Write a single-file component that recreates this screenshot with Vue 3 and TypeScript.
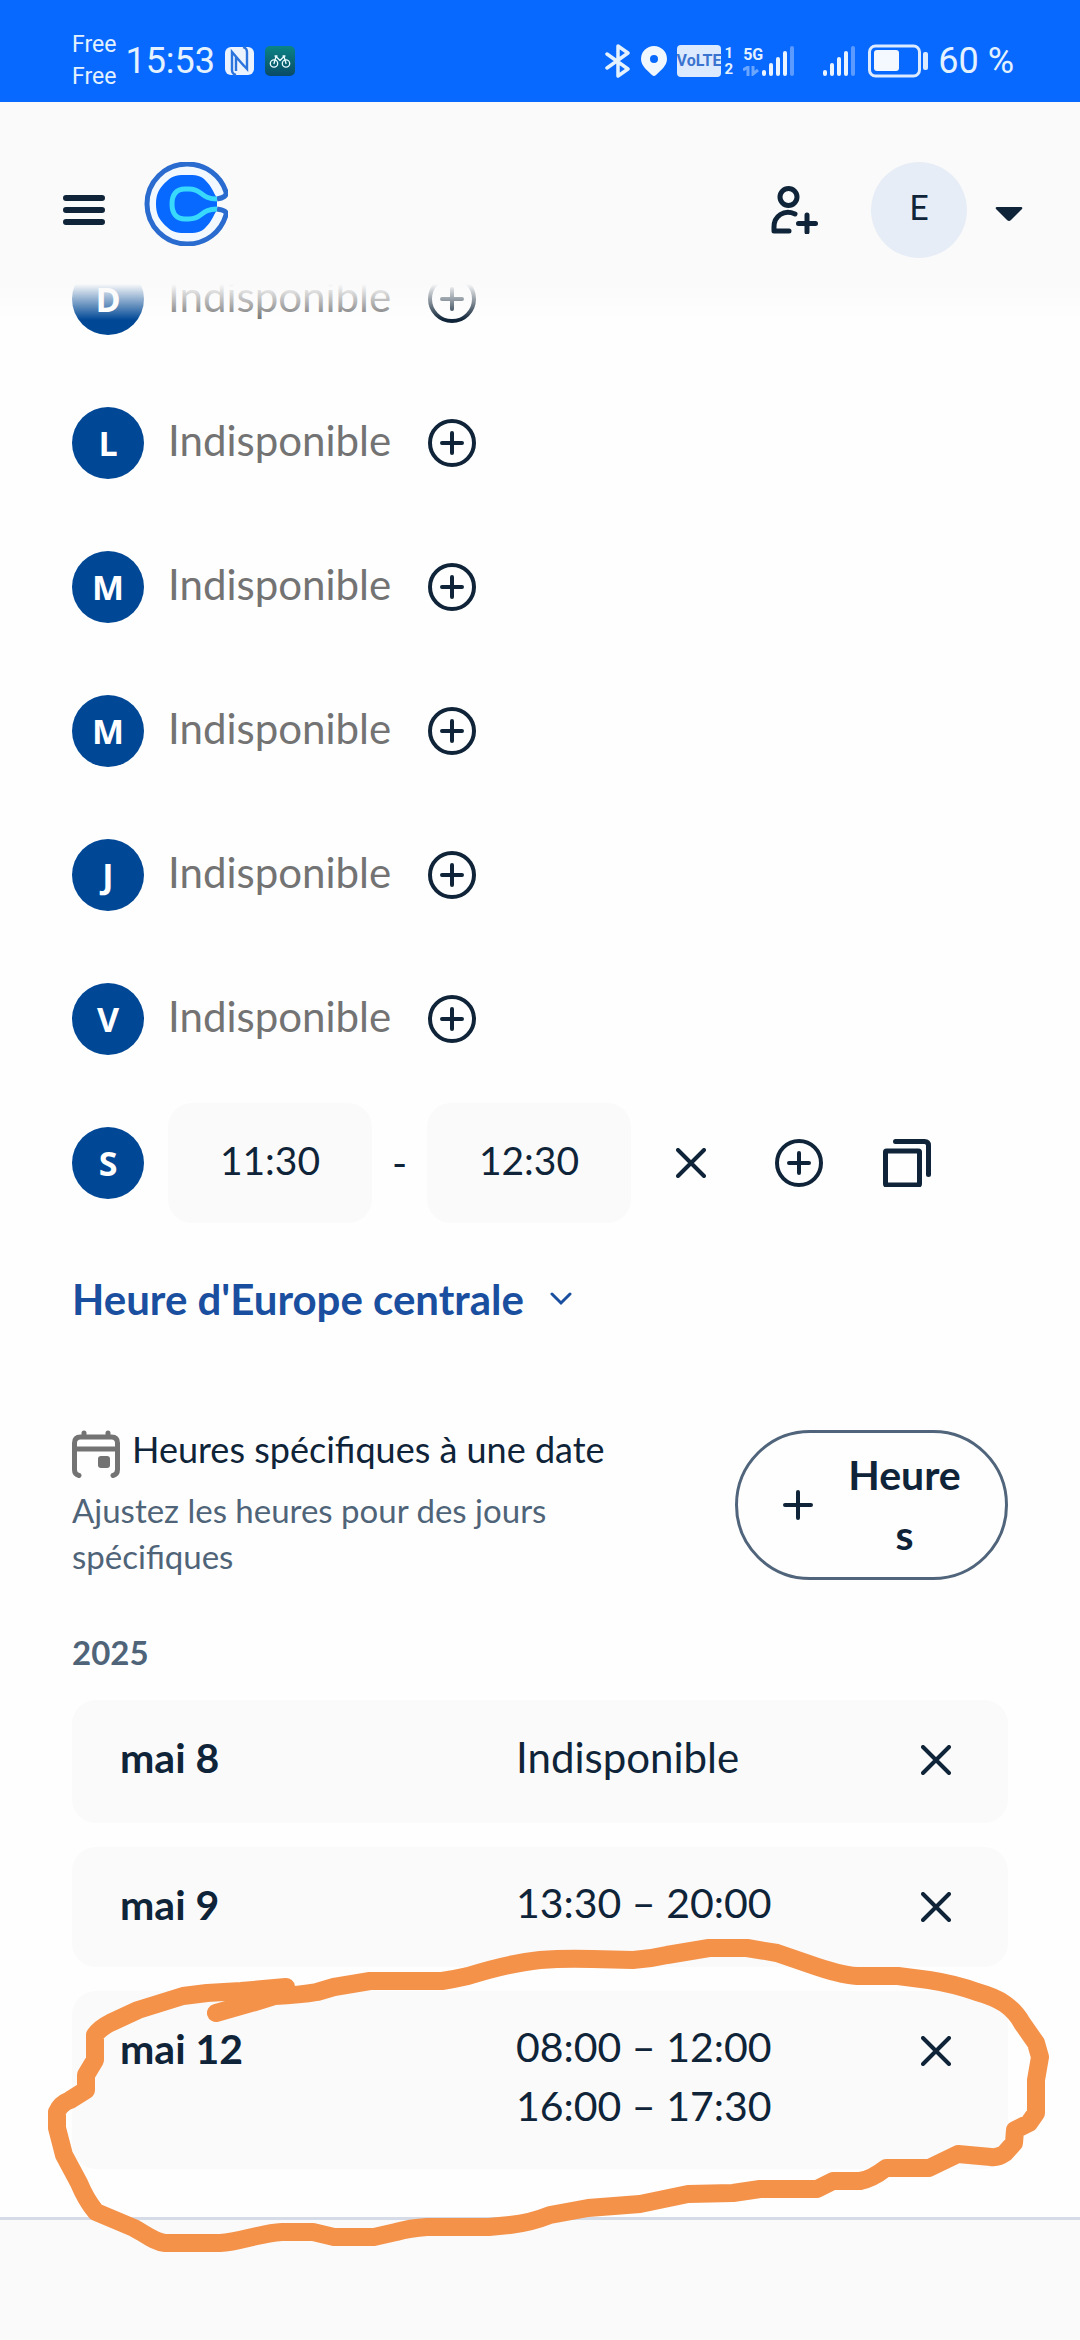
<script setup lang="ts">
import { ref } from 'vue'

interface Day {
  letter: string
  name: string
  start?: string
  end?: string
}

interface DateOverride {
  date: string
  slots: string[]
  circled?: boolean
}

const days = ref<Day[]>([
  { letter: 'D', name: 'dimanche' },
  { letter: 'L', name: 'lundi' },
  { letter: 'M', name: 'mardi' },
  { letter: 'M', name: 'mercredi' },
  { letter: 'J', name: 'jeudi' },
  { letter: 'V', name: 'vendredi' },
  { letter: 'S', name: 'samedi', start: '11:30', end: '12:30' },
])

const overrides = ref<DateOverride[]>([
  { date: 'mai 8', slots: [] },
  { date: 'mai 9', slots: ['13:30 – 20:00'] },
  { date: 'mai 12', slots: ['08:00 – 12:00', '16:00 – 17:30'], circled: true },
])
</script>

<template>
  <div class="page">
    <div class="status">
      <div class="carriers"><span>Free</span><span>Free</span></div>
      <span class="clock">15:53</span>
      <svg class="nfc" width="30" height="30" viewBox="0 0 30 30">
        <rect x="0" y="1" width="29" height="28" rx="6" fill="#eaf3ff" />
        <path d="M11 29q-4-1-4-5V6l12 14M18 1q4 1 4 5v17L11 11v14" fill="none" stroke="#2c74dd" stroke-width="2.400" />
      </svg>
      <svg class="bike" width="30" height="30" viewBox="0 0 30 30">
        <defs>
          <linearGradient id="bikeBg" x1="0" y1="0" x2="0" y2="1">
            <stop offset="0" stop-color="#0b8484" />
            <stop offset="1" stop-color="#0a4a66" />
          </linearGradient>
        </defs>
        <rect width="30" height="30" rx="5" fill="url(#bikeBg)" />
        <g fill="none" stroke="#eafcff" stroke-width="1.300" stroke-linecap="round" stroke-linejoin="round">
          <circle cx="9" cy="17.500" r="3.700" />
          <circle cx="21" cy="17.500" r="3.700" />
          <path d="M9 17.500l2-7 4 4 4-4 2 7M10 10h2M18 10h2" />
        </g>
      </svg>
      <span class="grow"></span>
      <svg class="bt" width="26" height="34" viewBox="0 0 26 34" fill="none" stroke="#e4f1ff" stroke-width="3.500" stroke-linejoin="round" stroke-linecap="round">
        <path d="M2 10l21 15-10 7V2l10 7L2 24" />
      </svg>
      <svg class="pin" width="26" height="30" viewBox="0 0 26 30">
        <path fill="#f1f7ff" fill-rule="evenodd" d="M13 0a13 13 0 0 1 13 13c0 7-7 12-11 16q-2 2-4 0C7 25 0 20 0 13A13 13 0 0 1 13 0zm0 9a4 4 0 1 0 0 8a4 4 0 0 0 0-8z" />
      </svg>
      <span class="volte">VoLTE</span>
      <span class="sims"><span>1</span><span>2</span></span>
      <span class="net">
        <span>5G</span>
        <svg width="16" height="10" viewBox="0 0 16 10" fill="none" stroke="#6aa6ff" stroke-width="3"><path d="M0 4l5-3v9M10 0v8l5-4" /></svg>
      </span>
      <svg v-for="sim in 2" :key="sim" class="bars" width="34" height="32" viewBox="0 0 34 32">
        <g fill="#eaf4ff"><rect x="1" y="25" width="4" height="6" rx="2" /><rect x="8" y="18" width="4" height="13" rx="2" /><rect x="15" y="12" width="4" height="19" rx="2" /><rect x="22" y="6" width="4" height="25" rx="2" /></g>
        <rect x="29" y="1" width="4" height="30" rx="2" fill="#5b9bff" />
      </svg>
      <svg class="battery" width="60" height="34" viewBox="0 0 60 34">
        <rect x="1.500" y="2" width="50" height="30" rx="6" fill="none" stroke="#dcebff" stroke-width="3" />
        <rect x="6" y="6" width="25" height="21" rx="3" fill="#f4f8ff" />
        <rect x="55" y="8" width="5" height="18" rx="2" fill="#dcebff" />
      </svg>
      <span class="percent">60 %</span>
    </div>

    <header class="topbar">
      <button class="plain menu" type="button" aria-label="Menu">
        <svg width="42" height="30" viewBox="0 0 42 30" stroke="#0f2438" stroke-width="6" stroke-linecap="round"><path d="M3 3h36M3 15h36M3 27h36" /></svg>
      </button>
      <a class="logo" href="#" aria-label="Accueil">
        <svg width="84" height="84" viewBox="0 0 84 84" fill="none">
          <path d="M73 47c6 1 10 2 9 6C77 70 62 82 43 82A40 40 0 0 1 43 2C62 2 77 14 82 30c1 4-3 6-9 7" fill="#f2f8ff" stroke="#2a6bd0" stroke-width="5" />
          <path d="M43 13c8 0 14 0 19 6 6 6 7 11 11 17v12c-4 6-5 11-11 17-5 6-11 6-19 6s-14 0-20-6C15 58 12 52 12 42s3-16 11-23c6-6 12-6 20-6z" fill="#0769ff" />
          <path d="M73 47c-17 0-14 10-28 10h-4C32 57 28 51 28 42s4-15 13-15h4c14 0 11 10 28 10" stroke="#38d9fb" stroke-width="5" />
        </svg>
      </a>
      <span class="grow"></span>
      <button class="plain invite" type="button" aria-label="Inviter">
        <svg width="48" height="48" viewBox="0 0 48 48" fill="none" stroke="#0f2438" stroke-width="5" stroke-linecap="round" stroke-linejoin="round">
          <circle cx="17.500" cy="11" r="8.500" />
          <path d="M24 28C13 23 3 30 3 41v4h15M36 29v17M27.500 37.500h17" />
        </svg>
      </button>
      <button class="plain account" type="button" aria-label="Compte">
        <span class="avatar">E</span>
        <svg class="caret" width="28" height="16" viewBox="0 0 28 16"><path d="M2 1h24q2 0 1 2L16 14q-2 2-4 0L1 3Q0 1 2 1z" fill="#0f2438" /></svg>
      </button>
    </header>

    <main class="content">
      <ul class="days">
        <li v-for="(day, i) in days" :key="i" class="day">
          <span class="badge">{{ day.letter }}</span>
          <template v-if="day.start">
            <input v-model="day.start" class="time" type="text" :aria-label="`Début ${day.name}`" />
            <span class="dash">-</span>
            <input v-model="day.end" class="time" type="text" :aria-label="`Fin ${day.name}`" />
            <div class="actions">
              <button class="plain action" type="button" aria-label="Supprimer">
                <svg width="30" height="30" viewBox="0 0 30 30" class="stroke"><path d="M2 2l26 26M28 2L2 28" /></svg>
              </button>
              <button class="plain action" type="button" aria-label="Ajouter">
                <svg width="48" height="48" viewBox="0 0 48 48" class="stroke"><circle cx="24" cy="24" r="22" /><path d="M24 14v20M14 24h20" /></svg>
              </button>
              <button class="plain action" type="button" aria-label="Copier">
                <svg width="48" height="48" viewBox="0 0 48 48" class="stroke heavy"><rect x="2.500" y="12" width="34" height="34" rx="1" /><path d="M12.500 2.500h29q4 0 4 4v29" /></svg>
              </button>
            </div>
          </template>
          <template v-else>
            <span class="off">Indisponible</span>
            <button class="plain add" type="button" :aria-label="`Ajouter ${day.name}`">
              <svg width="48" height="48" viewBox="0 0 48 48" class="stroke"><circle cx="24" cy="24" r="22" /><path d="M24 14v20M14 24h20" /></svg>
            </button>
          </template>
        </li>
      </ul>

      <button class="plain zone" type="button">
        <span>Heure d'Europe centrale</span>
        <svg width="22" height="14" viewBox="0 0 22 14" fill="none" stroke="#1a4f9f" stroke-width="3" stroke-linecap="round"><path d="M2 2l9 9 9-9" /></svg>
      </button>

      <section class="specific">
        <div class="intro">
          <div class="heading">
            <svg width="48" height="48" viewBox="0 0 48 48" fill="none" stroke="#737373" stroke-width="5" stroke-linecap="round">
              <path d="M7 45.500q-4.500-1-4.500-6V13q0-6 6-6h31q6 0 6 6v26.500q0 5-4.500 6M3 19h42M12 3v3M36 3v3" />
              <rect x="26" y="26" width="12" height="12" rx="3" fill="#737373" stroke="none" />
            </svg>
            <h2>Heures spécifiques à une date</h2>
          </div>
          <p>Ajustez les heures pour des jours spécifiques</p>
        </div>
        <button class="hours" type="button">
          <svg width="48" height="48" viewBox="0 0 48 48" class="stroke"><path d="M24 11v26M11 24h26" /></svg>
          <span>Heures</span>
        </button>
      </section>

      <h3>2025</h3>
      <ul class="cards">
        <li v-for="item in overrides" :key="item.date" class="card">
          <strong>{{ item.date }}</strong>
          <div class="slots">
            <span v-if="!item.slots.length" class="none">Indisponible</span>
            <span v-for="slot in item.slots" :key="slot">{{ slot }}</span>
          </div>
          <button class="plain remove" type="button" :aria-label="`Supprimer ${item.date}`">
            <svg width="30" height="30" viewBox="0 0 30 30" class="stroke"><path d="M2 2l26 26M28 2L2 28" /></svg>
          </button>
          <svg v-if="item.circled" class="marker" viewBox="40 1930 1016 330" preserveAspectRatio="none" aria-hidden="true">
            <path d="M216 2013L255 2002L275 1996Q300 1995 317 1992L334 1987L370 1981H442Q455 1979 468 1976Q510 1963 540 1960Q565 1958 592 1959L633 1960Q650 1959 667 1955L709 1948H747L777 1953L809 1964Q840 1975 857 1976H898L929 1980Q955 1984 977 1992Q995 1997 1005 2004Q1016 2012 1022 2023L1036 2043L1040 2057L1036 2080V2113L1029 2123L1015 2130L1014 2143L1005 2153Q998 2158 991 2157L958 2154L929 2168H886Q872 2179 860 2181H833L817 2189H760L733 2193L688 2194L640 2204L588 2208L550 2215Q530 2223 510 2225L489 2227H427Q410 2228 396 2232L374 2237H334L313 2232H282C260 2233 240 2242 220 2243H165C155 2242 145 2234 134 2228L96 2212Q86 2200 79 2183L64 2155L57 2128V2112Q60 2104 70 2100L86 2090V2075L95 2060V2035Q100 2028 110 2023L138 2010L183 1996L207 1993L241 1991L286 1987" />
          </svg>
        </li>
      </ul>
    </main>
    <footer class="foot"></footer>
  </div>
</template>

<style>
body {
  margin: 0;
}
</style>

<style scoped>
.page {
  display: flex;
  flex-direction: column;
  min-height: 100vh;
  background: #fefefe;
  color: #0f2438;
  font-family: Lato, 'Open Sans', sans-serif;
  font-size: 41px;
  line-height: 60px;
}
.page,
.page * {
  box-sizing: border-box;
}
.grow {
  flex: 1;
}
.plain {
  display: flex;
  align-items: center;
  justify-content: center;
  padding: 0;
  border: 0;
  background: none;
  color: inherit;
  font: inherit;
}
svg {
  display: block;
  flex: none;
}
ul {
  margin: 0;
  padding: 0;
  list-style: none;
}
.stroke {
  fill: none;
  stroke: #0f2438;
  stroke-width: 4px;
  stroke-linecap: round;
  stroke-linejoin: round;
}
.heavy {
  stroke-width: 5px;
}

.status {
  display: flex;
  align-items: center;
  height: 102px;
  padding: 20px 66px 0 72px;
  background: #0769ff;
  color: #e4f1ff;
  font-family: Roboto, sans-serif;
  font-size: 36px;
  line-height: 40px;
}
.carriers {
  display: flex;
  flex-direction: column;
  font-size: 23px;
  line-height: 32px;
}
.clock {
  margin-left: 9px;
}
.nfc,
.bike {
  margin-left: 10px;
}
.pin {
  margin-left: 10px;
}
.volte {
  width: 44px;
  height: 32px;
  margin-left: 10px;
  border-radius: 4px;
  background: #dceaff;
  color: #3a74cf;
  font-size: 16px;
  font-weight: 700;
  line-height: 32px;
  text-align: center;
}
.sims {
  display: flex;
  flex-direction: column;
  margin-left: 4px;
  font-size: 15px;
  font-weight: 700;
  line-height: 16px;
}
.net {
  display: flex;
  flex-direction: column;
  align-items: flex-start;
  gap: 2px;
  margin-left: 10px;
  font-size: 16px;
  font-weight: 700;
  line-height: 18px;
}
.net + .bars {
  margin-left: -2px;
}
.bars {
  margin-left: 27px;
}
.battery {
  margin-left: 12px;
}
.percent {
  margin-left: 10px;
}

.topbar {
  position: sticky;
  top: 0;
  z-index: 2;
  display: flex;
  align-items: flex-start;
  height: 182px;
  padding: 60px 57px 0 63px;
  background: #fafafa;
}
.topbar::after {
  content: '';
  position: absolute;
  top: 100%;
  left: 0;
  right: 0;
  height: 36px;
  background: linear-gradient(#fafafa, #fafafa00);
}
.menu {
  height: 96px;
}
.logo {
  margin-left: 39px;
}
.invite {
  height: 96px;
  margin-right: 52px;
}
.account {
  gap: 28px;
}
.avatar {
  width: 96px;
  height: 96px;
  border-radius: 50%;
  background: #e7edf6;
  font-size: 34px;
  line-height: 90px;
  text-align: center;
}
.caret {
  margin-top: 8px;
}

.content {
  margin-top: -57px;
  padding: 0 72px 48px;
}
.day {
  display: flex;
  align-items: center;
  height: 144px;
}
.badge {
  width: 72px;
  height: 72px;
  border-radius: 50%;
  background: #004896;
  color: #fff;
  font-family: 'Open Sans', sans-serif;
  font-size: 34px;
  font-weight: 700;
  line-height: 72px;
  text-align: center;
}
.off {
  width: 236px;
  margin-left: 24px;
  padding-bottom: 6px;
  color: #737373;
  font-size: 42px;
}
.add {
  width: 96px;
  height: 96px;
}
.time {
  width: 204px;
  height: 120px;
  padding: 0 0 6px;
  border: 0;
  border-radius: 24px;
  background: #fafafa;
  color: inherit;
  font: inherit;
  font-size: 39px;
  text-align: center;
}
.badge + .time {
  margin-left: 24px;
}
.dash {
  width: 55px;
  text-align: center;
}
.actions {
  display: flex;
  margin-left: 6px;
}
.action {
  width: 108px;
  height: 120px;
}
.zone {
  gap: 26px;
  margin-top: 34px;
  color: #1a4f9f;
  font-size: 42px;
  font-weight: 700;
}

.specific {
  display: flex;
  align-items: flex-start;
  justify-content: space-between;
  margin-top: 101px;
}
.intro {
  max-width: 580px;
}
.heading {
  display: flex;
  gap: 12px;
}
h2 {
  margin: 0;
  font-size: 36px;
  font-weight: 400;
  line-height: 38px;
}
p {
  max-width: 500px;
  margin: 9px 0 0;
  color: #4f6478;
  font-size: 33px;
  line-height: 46px;
}
.hours {
  display: flex;
  align-items: center;
  gap: 18px;
  width: 273px;
  padding: 12px 36px;
  border: 3px solid #50657b;
  border-radius: 75px;
  background: none;
  color: inherit;
  font: inherit;
  font-weight: 700;
}
.hours span {
  flex: 1;
  min-width: 0;
  overflow-wrap: anywhere;
}
h3 {
  margin: 49px 0 25px;
  color: #4f6478;
  font-size: 33px;
  font-weight: 700;
  line-height: 46px;
}
.cards {
  display: flex;
  flex-direction: column;
  gap: 24px;
}
.card {
  position: relative;
  display: flex;
  align-items: flex-start;
  padding: 0 24px 0 48px;
  border-radius: 24px;
  background: #fafafa;
}
.card strong {
  width: 396px;
  padding-top: 28px;
}
.slots {
  display: flex;
  flex: 1;
  flex-direction: column;
  padding: 26px 0 34px;
  line-height: 59px;
}
.none {
  font-size: 42px;
  line-height: 63px;
}
.remove {
  width: 96px;
  height: 120px;
}
.marker {
  position: absolute;
  top: -61px;
  left: -32px;
  width: calc(100% + 80px);
  height: 330px;
  fill: none;
  stroke: #f4924a;
  stroke-width: 18px;
  stroke-linecap: round;
  stroke-linejoin: round;
  pointer-events: none;
}
.foot {
  flex: 1;
  border-top: 3px solid #d5dbe7;
  background: #fafafa;
}
</style>
